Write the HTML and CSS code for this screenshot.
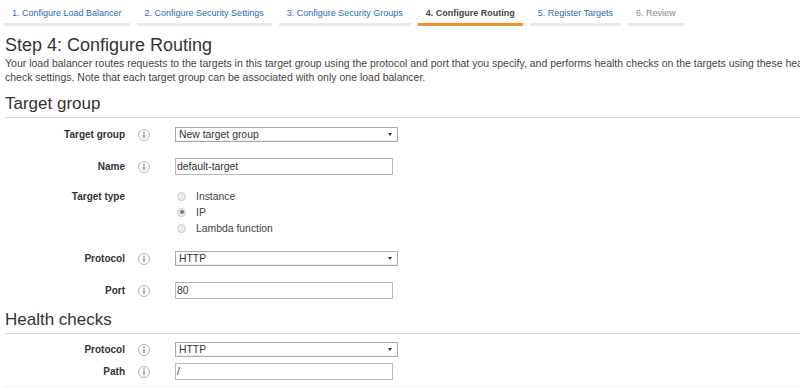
FILE: index.html
```html
<!DOCTYPE html>
<html lang="en">
<head>
    <meta charset="UTF-8">
    <title>Configure Routing</title>
    <link rel="stylesheet" href="styles.css">
</head>
<body>
    <!-- wizard steps -->
    <nav class="steps">
        <a class="step">1. Configure Load Balancer</a>
        <a class="step">2. Configure Security Settings</a>
        <a class="step">3. Configure Security Groups</a>
        <a class="step active">4. Configure Routing</a>
        <a class="step">5. Register Targets</a>
        <a class="step disabled">6. Review</a>
    </nav>

    <div class="page">
        <h1>Step 4: Configure Routing</h1>
        <p class="intro">Your load balancer routes requests to the targets in this target group using the protocol and port that you specify, and performs health checks on the targets using these health check settings. Note that each target group can be associated with only one load balancer.</p>

        <h2>Target group</h2>
        <div class="form">
            <div class="row">
                <div class="label">Target group <span class="info"><svg width="12" height="12" viewBox="0 0 12 12"><circle cx="6" cy="6" r="5.5" fill="#fff" stroke="#b5b5b5"/><circle cx="6" cy="3.4" r="0.9" fill="#8a8a8a"/><rect x="5.3" y="5" width="1.4" height="4.2" fill="#8a8a8a"/></svg></span></div>
                <div class="select">New target group</div>
            </div>
            <div class="row">
                <div class="label">Name <span class="info"><svg width="12" height="12" viewBox="0 0 12 12"><circle cx="6" cy="6" r="5.5" fill="#fff" stroke="#b5b5b5"/><circle cx="6" cy="3.4" r="0.9" fill="#8a8a8a"/><rect x="5.3" y="5" width="1.4" height="4.2" fill="#8a8a8a"/></svg></span></div>
                <div class="input">default-target</div>
            </div>
            <div class="row top">
                <div class="label">Target type <span class="info blank"></span></div>
                <div class="radios">
                    <div class="radio-item"><span class="radio"></span>Instance</div>
                    <div class="radio-item"><span class="radio checked"></span>IP</div>
                    <div class="radio-item"><span class="radio"></span>Lambda function</div>
                </div>
            </div>
            <div class="row">
                <div class="label">Protocol <span class="info"><svg width="12" height="12" viewBox="0 0 12 12"><circle cx="6" cy="6" r="5.5" fill="#fff" stroke="#b5b5b5"/><circle cx="6" cy="3.4" r="0.9" fill="#8a8a8a"/><rect x="5.3" y="5" width="1.4" height="4.2" fill="#8a8a8a"/></svg></span></div>
                <div class="select">HTTP</div>
            </div>
            <div class="row">
                <div class="label">Port <span class="info"><svg width="12" height="12" viewBox="0 0 12 12"><circle cx="6" cy="6" r="5.5" fill="#fff" stroke="#b5b5b5"/><circle cx="6" cy="3.4" r="0.9" fill="#8a8a8a"/><rect x="5.3" y="5" width="1.4" height="4.2" fill="#8a8a8a"/></svg></span></div>
                <div class="input">80</div>
            </div>
        </div>

        <h2 class="next">Health checks</h2>
        <div class="form tight">
            <div class="row">
                <div class="label">Protocol <span class="info"><svg width="12" height="12" viewBox="0 0 12 12"><circle cx="6" cy="6" r="5.5" fill="#fff" stroke="#b5b5b5"/><circle cx="6" cy="3.4" r="0.9" fill="#8a8a8a"/><rect x="5.3" y="5" width="1.4" height="4.2" fill="#8a8a8a"/></svg></span></div>
                <div class="select">HTTP</div>
            </div>
            <div class="row">
                <div class="label">Path <span class="info"><svg width="12" height="12" viewBox="0 0 12 12"><circle cx="6" cy="6" r="5.5" fill="#fff" stroke="#b5b5b5"/><circle cx="6" cy="3.4" r="0.9" fill="#8a8a8a"/><rect x="5.3" y="5" width="1.4" height="4.2" fill="#8a8a8a"/></svg></span></div>
                <div class="input">/</div>
            </div>
        </div>
        <div class="rule"></div>
    </div>
</body>
</html>
```

FILE: styles.css
```css
body {
    margin: 0;
    font-family: 'Liberation Sans', Arial, sans-serif;
    color: #444;
    background: #fff;
    overflow: hidden;
}

/* wizard steps */
.steps {
    display: flex;
    gap: 7px;
    padding: 0 4px;
}
.step {
    font-size: 9px;
    color: #2a6cb3;
    padding: 8px 8px 5px;
    border-bottom: 3px solid #eaeaea;
}
.step.active {
    color: #444;
    font-weight: bold;
    border-bottom-color: #f0932b;
}
.step.disabled {
    color: #888;
}

/* page is wider than the window, text runs off the right edge */
.page {
    width: 830px;
    padding: 0 0 0 5px;
}
h1 {
    font-size: 18px;
    font-weight: normal;
    color: #333;
    margin: 8px 0 0;
    line-height: 22px;
}
.intro {
    font-size: 10.5px;
    line-height: 14px;
    margin: 0;
}
h2 {
    font-size: 17px;
    font-weight: normal;
    color: #333;
    margin: 10px 0 0;
    padding-bottom: 3px;
    line-height: 20px;
    border-bottom: 1px solid #ddd;
}
h2.next {
    margin-top: 3px;
}

/* form rows */
.form {
    padding: 1px 0 0;
}
.row {
    display: flex;
    align-items: center;
    padding: 8px 0;
}
.row.top {
    align-items: flex-start;
    padding: 5px 0 7px;
}
.form.tight {
    padding: 8px 0 0;
}
.form.tight .row {
    padding: 0 0 6px;
}
.label {
    width: 145px;
    flex: none;
    display: flex;
    justify-content: flex-end;
    align-items: center;
    gap: 13px;
    font-size: 10px;
    font-weight: bold;
    color: #333;
}
.row.top .label {
    height: 16px;
}
.info {
    width: 12px;
    height: 12px;
    display: block;
}
.info svg {
    display: block;
}
.select,
.input {
    margin-left: 25px;
    font-size: 10.4px;
    color: #333;
    border: 1px solid #a9a9a9;
    box-sizing: border-box;
}
.select {
    position: relative;
    width: 223px;
    height: 15px;
    line-height: 13px;
    padding-left: 3px;
    box-shadow: inset 0 -1px 0 #eee;
}
.select::after {
    content: "";
    position: absolute;
    right: 5px;
    top: 5px;
    border-left: 2.5px solid transparent;
    border-right: 2.5px solid transparent;
    border-top: 3.5px solid #333;
}
.input {
    width: 218px;
    height: 17px;
    line-height: 15px;
    padding-left: 1px;
    border-color: #b8b8b8;
}

/* radio buttons */
.radios {
    margin-left: 25px;
}
.radio-item {
    display: flex;
    align-items: center;
    height: 16px;
    font-size: 10.4px;
    color: #444;
}
.radio {
    width: 9px;
    height: 9px;
    box-sizing: border-box;
    border-radius: 50%;
    border: 1px solid #c9c9c9;
    background: #ececec;
    margin: 0 10px 0 2px;
    position: relative;
}
.radio.checked::after {
    content: "";
    position: absolute;
    left: 1.5px;
    top: 1.5px;
    width: 4px;
    height: 4px;
    border-radius: 50%;
    background: #777;
}

.rule {
    border-top: 1px solid #eee;
}
```
